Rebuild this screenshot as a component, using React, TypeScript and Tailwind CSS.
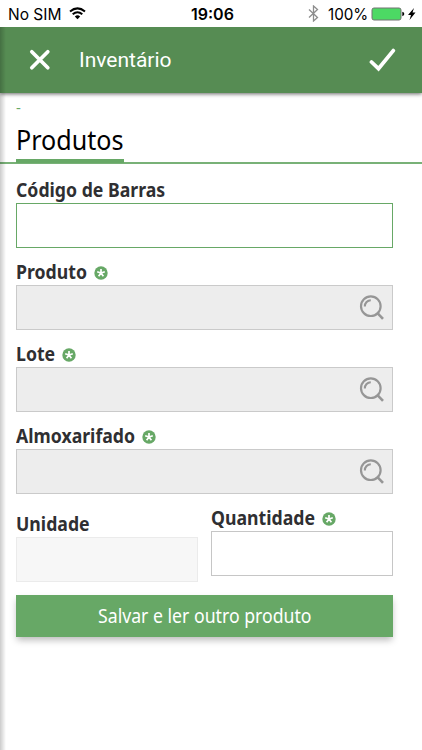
import type { ReactNode } from "react";

function Required() {
  return (
    <svg className="mt-[2px] h-[14px] w-[14px] shrink-0" viewBox="0 0 14 14">
      <circle cx="7" cy="7" r="6.7" fill="#67a866" />
      <path d="M7 7V3M7 7l3.8-1.2M7 7l2.4 3.3M7 7l-2.4 3.3M7 7L3.2 5.8" stroke="#fff" strokeWidth="1.7" />
    </svg>
  );
}

function Label({ width, required, children }: { width: string; required?: boolean; children: ReactNode }) {
  return (
    <div className="flex h-[27px] items-center text-[19px] leading-[28px] font-bold text-[#2f2f32]">
      <span className={`${width} origin-left scale-x-[0.93] whitespace-nowrap`}>{children}</span>
      {required && <Required />}
    </div>
  );
}

function SearchBox() {
  return (
    <div className="flex h-[45px] items-center justify-end border border-[#cacaca] bg-[#ededed] pr-[7px]">
      <svg className="h-[28px] w-[28px]" viewBox="0 0 28 28" fill="none" stroke="#969696">
        <circle cx="13.8" cy="12.2" r="9.8" strokeWidth="2.2" />
        <path d="M7.8 12.4a6.2 6.2 0 0 1 6-6.2" strokeWidth="2.1" />
        <path d="M20 18.6l6 6.2" strokeWidth="2.6" />
      </svg>
    </div>
  );
}

export default function App() {
  return (
    <div className="relative h-[750px] w-[422px] overflow-hidden bg-white font-['Noto_Sans',sans-serif]">
      <div className="relative z-10 flex h-[27px] items-center bg-white pl-[8px] font-['Inter',sans-serif] text-[16px] text-black">
        <span className="w-[61px] origin-left scale-x-[0.97] whitespace-nowrap">No SIM</span>
        <svg className="h-[13px] w-[17px]" viewBox="0 0 17 13" fill="none" stroke="#000" strokeWidth="2">
          <path d="M1 4.6Q8.5-1.8 16 4.6M3.7 7.3Q8.5 3.2 13.3 7.3" />
          <path d="M5.8 9.4Q8.5 7.3 11.2 9.4L8.5 12.2Z" fill="#000" stroke="none" />
        </svg>
        <span className="ml-[105px] w-[117px] text-[16px] font-semibold">19:06</span>
        <svg className="h-[17px] w-[11px]" viewBox="0 0 11 17" fill="none" stroke="#8d8d8d" strokeWidth="1.3">
          <path d="M1 4.5l8.5 8-4 3.5V1l4 3.5-8.5 8" />
        </svg>
        <span className="ml-[9px] w-[43px] origin-left scale-x-[0.95] whitespace-nowrap">100%</span>
        <svg className="h-[14px] w-[49px]" viewBox="0 0 49 14">
          <rect x="1" y="1" width="29" height="12" rx="2" fill="#4cd964" stroke="#737373" />
          <path d="M31.3 4.8q2 .6 2 2.2t-2 2.2z" fill="#000" />
          <path d="M43 1l-6 7h3l-1.5 5 6-7.4h-3z" fill="#000" />
        </svg>
      </div>

      <header className="relative flex h-[66px] items-center bg-[#568c53] pl-[29px] shadow-[0_1px_4px_rgba(0,0,0,0.6)]">
        <svg className="h-[22px] w-[22px]" viewBox="0 0 22 22" stroke="#fff" strokeWidth="3.7" strokeLinecap="round">
          <path d="M2.8 2.8l16 16M18.8 2.8l-16 16" />
        </svg>
        <h1 className="ml-[28px] w-[289px] pt-[1px] font-['Roboto',sans-serif] text-[21px] text-white">Inventário</h1>
        <svg className="h-[24px] w-[28px]" viewBox="0 0 28 24" fill="none" stroke="#fff" strokeWidth="3.8" strokeLinecap="round">
          <path d="M3.5 14l7 6.7L25.3 2.6" />
        </svg>
      </header>

      <div className="h-[71px] border-b-2 border-[#78b177] pl-[16px]">
        <div className="h-[29px] text-[15px] leading-[29px] text-[#67a866]">-</div>
        <div className="h-[41px] w-[108px] border-b-4 border-[#67a866] text-[27px] leading-[36px] text-black">
          <h2 className="origin-left scale-x-[0.93] whitespace-nowrap">Produtos</h2>
        </div>
      </div>

      <main className="flex flex-col pr-[29px] pl-[16px]">
        <div className="h-[82px] pt-[12px]">
          <Label width="w-[150px]">Código de Barras</Label>
          <div className="h-[45px] border border-[#67a866] bg-white" />
        </div>
        <div className="h-[82px] pt-[12px]">
          <Label width="w-[78px]" required>Produto</Label>
          <SearchBox />
        </div>
        <div className="h-[82px] pt-[12px]">
          <Label width="w-[46px]" required>Lote</Label>
          <SearchBox />
        </div>
        <div className="h-[82px] pt-[12px]">
          <Label width="w-[126px]" required>Almoxarifado</Label>
          <SearchBox />
        </div>
        <div className="flex h-[103px] gap-[13px]">
          <div className="w-[182px] pt-[18px]">
            <Label width="w-[80px]">Unidade</Label>
            <div className="h-[45px] border border-[#ebebeb] bg-[#f7f7f7]" />
          </div>
          <div className="w-[182px] pt-[12px]">
            <Label width="w-[111px]" required>Quantidade</Label>
            <div className="h-[45px] border border-[#c6c6c6] bg-white" />
          </div>
        </div>
        <button className="flex h-[42px] items-center justify-center bg-[#67a866] text-[19px] text-white shadow-[0_4px_7px_-1px_rgba(0,0,0,0.28)]">
          <span className="scale-x-[0.93] whitespace-nowrap">Salvar e ler outro produto</span>
        </button>
      </main>
      <div className="absolute top-[27px] bottom-0 left-0 w-[6px] bg-linear-to-r from-black/20 to-transparent" />
    </div>
  );
}
